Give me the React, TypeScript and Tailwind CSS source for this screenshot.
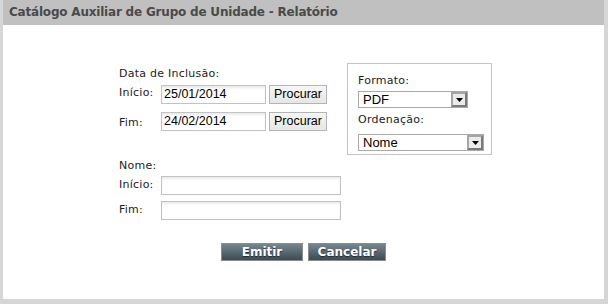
import React from "react";

const verdana = { fontFamily: '"DejaVu Sans", Verdana, sans-serif' };

function TextInput({ value, w }: { value?: string; w: string }) {
  return (
    <div
      className={`${w} h-[19px] border border-[#c2c2c2] bg-white shadow-[inset_0_2px_2px_#ececec] pl-[2px] text-[12.5px] leading-[17px] text-black`}
      style={{ fontFamily: '"Liberation Sans", Arial, sans-serif' }}
    >
      {value}
    </div>
  );
}

function Procurar() {
  return (
    <div
      className="w-[58px] h-[19px] border border-[#b4b4b4] bg-linear-to-b from-[#f6f6f6] to-[#e6e6e6] text-[12.5px] leading-[17px] text-black text-center"
      style={{ fontFamily: '"Liberation Sans", Arial, sans-serif' }}
    >
      Procurar
    </div>
  );
}

function Select({ value, w }: { value: string; w: string }) {
  return (
    <div
      className={`${w} h-[17px] border border-[#a9a9a9] bg-white flex items-stretch`}
      style={{ fontFamily: '"Liberation Sans", Arial, sans-serif' }}
    >
      <div className="flex-1 pl-[4px] text-[13px] leading-[15px] text-black">{value}</div>
      <div className="w-[16px] border-2 border-t-[#a5a5a5] border-l-[#a5a5a5] border-r-[#7a7a7a] border-b-[#7a7a7a] bg-[#ebebeb] flex items-center justify-center">
        <svg width="7" height="4" viewBox="0 0 7 4">
          <path d="M0 0 H7 L3.5 4 Z" fill="#000" />
        </svg>
      </div>
    </div>
  );
}

function Label({ children }: { children: React.ReactNode }) {
  return (
    <div className="w-[42px] text-[11px] leading-[13px] tracking-[0.25px] text-[#222] pt-[1px]" style={verdana}>
      {children}
    </div>
  );
}

export default function App() {
  return (
    <div className="w-[608px] h-[304px] bg-[#d6d6d6] pl-[3px] pr-[4px] pb-[5px]">
      <div className="h-full bg-white flex flex-col">
        <div
          className="h-[25px] bg-[#c0c0c0] pl-[6px] text-[12px] font-bold leading-[25px] tracking-[-0.2px] text-[#4a4a4a]"
          style={verdana}
        >
          Catálogo Auxiliar de Grupo de Unidade - Relatório
        </div>
        <div className="pt-[38px] pl-[116px] flex">
          <div className="w-[228px] flex flex-col">
            <div className="mt-[4px] h-[13px] text-[11px] leading-[13px] tracking-[0.25px] text-[#222]" style={verdana}>
              Data de Inclusão:
            </div>
            <div className="mt-[5px] flex items-start">
              <Label>Início:</Label>
              <TextInput value="25/01/2014" w="w-[105px]" />
              <div className="ml-[3px]">
                <Procurar />
              </div>
            </div>
            <div className="mt-[8px] flex items-start">
              <div className="pt-[3px]">
                <Label>Fim:</Label>
              </div>
              <TextInput value="24/02/2014" w="w-[105px]" />
              <div className="ml-[3px]">
                <Procurar />
              </div>
            </div>
            <div className="mt-[28px] h-[13px] text-[11px] leading-[13px] tracking-[0.25px] text-[#222]" style={verdana}>
              Nome:
            </div>
            <div className="mt-[4px] flex items-start">
              <div className="pt-[1px]">
                <Label>Início:</Label>
              </div>
              <TextInput w="w-[180px]" />
            </div>
            <div className="mt-[6px] flex items-start">
              <div className="pt-[1px]">
                <Label>Fim:</Label>
              </div>
              <TextInput w="w-[180px]" />
            </div>
          </div>
          <div className="w-[145px] h-[92px] border border-[#c4c4c4] pl-[10px] pt-[10px] flex flex-col">
            <div className="h-[13px] text-[11px] leading-[13px] tracking-[0.25px] text-[#222]" style={verdana}>
              Formato:
            </div>
            <div className="mt-[4px]">
              <Select value="PDF" w="w-[110px]" />
            </div>
            <div className="mt-[5px] h-[13px] text-[11px] leading-[13px] tracking-[0.25px] text-[#222]" style={verdana}>
              Ordenação:
            </div>
            <div className="mt-[8px]">
              <Select value="Nome" w="w-[126px]" />
            </div>
          </div>
        </div>
        <div className="mt-[23px] flex justify-center gap-[5px]">
          <div
            className="w-[82px] h-[18px] border border-[#8c8c8c] bg-linear-to-b from-[#76878f] to-[#3c4c54] text-white font-bold text-[12px] leading-[16px] text-center [text-shadow:0_1px_1px_#1e2a30]"
            style={verdana}
          >
            Emitir
          </div>
          <div
            className="w-[78px] h-[18px] border border-[#8c8c8c] bg-linear-to-b from-[#76878f] to-[#3c4c54] text-white font-bold text-[12px] leading-[16px] text-center [text-shadow:0_1px_1px_#1e2a30]"
            style={verdana}
          >
            Cancelar
          </div>
        </div>
      </div>
    </div>
  );
}
